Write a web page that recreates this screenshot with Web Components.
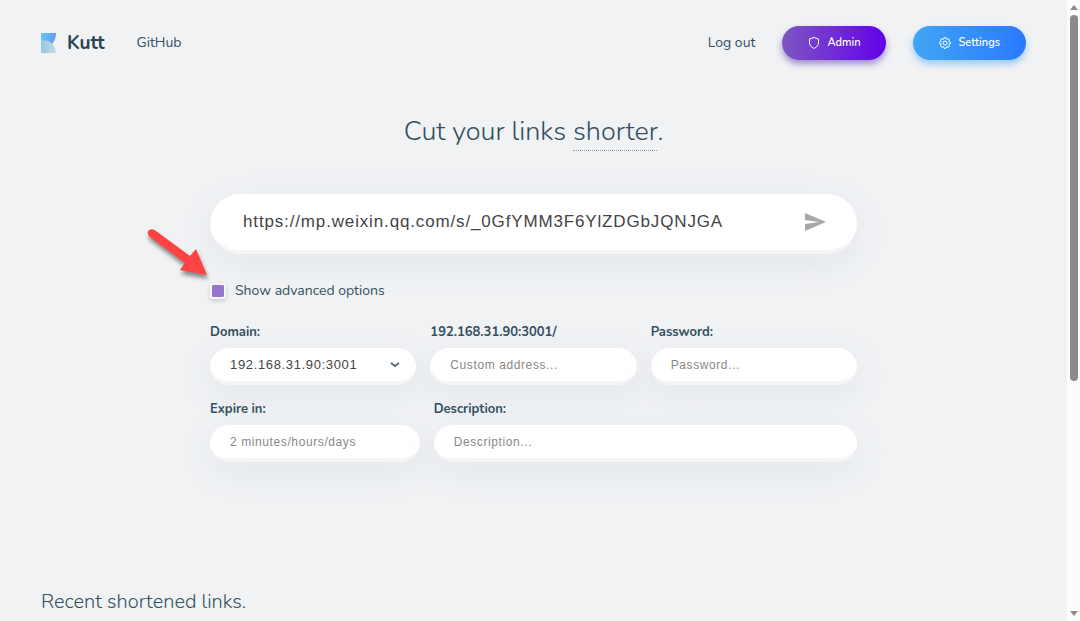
<!DOCTYPE html>
<html lang="en">
<head>
<meta charset="utf-8">
<meta name="viewport" content="width=device-width, initial-scale=1">
<title>Kutt</title>
<style>
  body {
    margin: 0;
    background: #f0f2f4;
    color: #35505f;
    font-family: Nunito, Lato, sans-serif;
    font-size: 14px;
  }
</style>
</head>
<body>
<kutt-app></kutt-app>

<template id="app">
  <style>
    :host { display: flex; min-height: 100vh; }
    .page { flex: 1; min-width: 0; display: flex; flex-direction: column; position: relative; }
    main { width: 100%; max-width: 647px; margin: 0 auto; }
    h1 {
      margin: 52px 0 42px;
      text-align: center;
      font-size: 27px;
      line-height: 40px;
      font-weight: 300;
    }
    h1 span { border-bottom: 1px dotted #909aa0; }
    form { display: flex; flex-direction: column; }
    kutt-check { margin: 28px 0 22px; }
    .row { display: grid; gap: 14px; margin-bottom: 14px; }
    .thirds { grid-template-columns: 1fr 1fr 1fr; }
    .wide { grid-template-columns: 105fr 212fr; }
    .recent { margin: 110px 41px 0; }
    h2 { margin: 0; font-size: 20px; line-height: 32px; font-weight: 300; }
    kutt-pointer { position: absolute; top: 222px; right: calc(50% + 326px); }
  </style>
  <div class="page">
    <kutt-header></kutt-header>
    <main>
      <h1>Cut your links <span>shorter</span>.</h1>
      <form>
        <kutt-url></kutt-url>
        <kutt-check>Show advanced options</kutt-check>
        <div class="row thirds">
          <kutt-select value="192.168.31.90:3001">Domain:</kutt-select>
          <kutt-field placeholder="Custom address...">192.168.31.90:3001/</kutt-field>
          <kutt-field type="password" placeholder="Password...">Password:</kutt-field>
        </div>
        <div class="row wide">
          <kutt-field placeholder="2 minutes/hours/days">Expire in:</kutt-field>
          <kutt-field placeholder="Description...">Description:</kutt-field>
        </div>
      </form>
    </main>
    <section class="recent"><h2>Recent shortened links.</h2></section>
    <kutt-pointer></kutt-pointer>
  </div>
  <kutt-scrollbar></kutt-scrollbar>
</template>

<template id="header">
  <style>
    :host { display: block; }
    header { display: flex; align-items: center; padding: 26px 41px 0; height: 34px; }
    a { color: inherit; text-decoration: none; }
    .logo { display: flex; align-items: center; gap: 10px; font-size: 19px; font-weight: 700; line-height: 24px; color: #2a4553; }
    .link { margin-left: 32px; line-height: 20px; }
    nav { display: flex; align-items: center; gap: 27px; margin-left: auto; line-height: 20px; }
    svg { display: block; }
  </style>
  <header>
    <a class="logo" href="#">
      <svg width="16" height="20" viewBox="0 0 16 20" aria-hidden="true">
        <defs>
          <linearGradient id="t" x1="0" x2="1"><stop stop-color="#5cc6fa"/><stop offset="1" stop-color="#7296f4"/></linearGradient>
          <linearGradient id="b" x1="0" x2="1"><stop stop-color="#92c9e6"/><stop offset="1" stop-color="#cbd8de"/></linearGradient>
        </defs>
        <path d="M0 0H15Q15 7 11 11L0 12Z" fill="url(#t)"/>
        <path d="M0 7Q14 7 15 20H0Z" fill="url(#b)"/>
      </svg>
      <span>Kutt</span>
    </a>
    <a class="link" href="#">GitHub</a>
    <nav>
      <a href="#">Log out</a>
      <kutt-button tone="purple">
        <svg slot="icon" width="12" height="12" viewBox="0 0 24 24" fill="none" stroke="#fff" stroke-width="2" stroke-linejoin="round" aria-hidden="true"><path d="M12 23s9-4 9-11V4l-9-3-9 3v8c0 7 9 11 9 11z"/></svg>
        Admin
      </kutt-button>
      <kutt-button tone="blue">
        <svg slot="icon" width="12" height="12" viewBox="0 0 24 24" fill="none" stroke="#fff" stroke-width="2" stroke-linejoin="round" aria-hidden="true"><circle cx="12" cy="12" r="4"/><path d="M12 1Q15 1 15 4.500Q18 3 20 4.500Q21.500 6.500 19.500 9Q23 9.500 23 12Q23 14.500 19.500 15Q21.500 17.500 20 19.500Q18 21 15 19.500Q14.500 23 12 23Q9.500 23 9 19.500Q6 21 4 19.500Q2.500 17.500 4.500 15Q1 14.500 1 12Q1 9.500 4.500 9Q2.500 6.500 4 4.500Q6 3 9 4.500Q9 1 12 1Z"/></svg>
        Settings
      </kutt-button>
    </nav>
  </header>
</template>

<template id="button">
  <style>
    :host { display: block; }
    button {
      display: flex; align-items: center; gap: 7px;
      height: 34px; padding: 0 26px; border: 0; border-radius: 17px;
      font: 600 11px/16px Nunito, Lato, sans-serif; color: #fff;
      background: linear-gradient(to right, #42a5f5, #2979ff);
      box-shadow: 0 4px 6px rgba(66, 165, 245, .5);
    }
    :host([tone="purple"]) button {
      background: linear-gradient(to right, #7e57c2, #6200ea);
      box-shadow: 0 4px 6px rgba(81, 45, 168, .5);
    }
  </style>
  <button type="button"><slot name="icon"></slot><span><slot></slot></span></button>
</template>

<template id="url">
  <style>
    :host { display: block; }
    .box {
      display: flex; align-items: center; box-sizing: border-box; height: 60px;
      padding: 0 31px 0 33px; background: #fff; border-radius: 30px;
      border-bottom: 4px solid #f5f5f5; box-shadow: 0 9px 32px rgba(160, 170, 190, .15);
    }
    input {
      flex: 1; min-width: 0; padding: 0; border: 0; outline: 0; background: none;
      font: 17px/24px "Liberation Sans", Arial, sans-serif; letter-spacing: 0.05em; color: #444;
    }
    button { padding: 0; border: 0; background: none; }
    svg { display: block; }
  </style>
  <div class="box">
    <input type="text" aria-label="Long URL" value="https://mp.weixin.qq.com/s/_0GfYMM3F6YlZDGbJQNJGA">
    <button type="button" aria-label="Shorten">
      <svg width="22" height="22" viewBox="0 0 22 22" fill="#a8a8a8"><path d="M1 2 22 11 1 20V13L15 11 1 9Z"/></svg>
    </button>
  </div>
</template>

<template id="check">
  <style>
    :host { display: block; }
    label { display: flex; align-items: center; gap: 9px; line-height: 18px; }
    input {
      appearance: none; box-sizing: border-box; width: 16px; height: 16px; margin: 0;
      border: 2px solid #f6f6fa; border-radius: 3px; background: #9575cd;
      background-clip: padding-box; box-shadow: 0 2px 4px rgba(50, 50, 50, .2);
    }
  </style>
  <label><input type="checkbox" checked><slot></slot></label>
</template>

<template id="field">
  <style>
    :host { display: block; min-width: 0; }
    label { display: block; margin-bottom: 6px; font-size: 13px; line-height: 20px; font-weight: 700; }
    .control { position: relative; }
    input, select {
      display: block; appearance: none; box-sizing: border-box; width: 100%; height: 37px;
      margin: 0; padding: 0 20px; border: 0; border-bottom: 4px solid #f5f5f5;
      border-radius: 19px; outline: 0; background: #fff;
      font: 13px/20px "Liberation Sans", Arial, sans-serif; letter-spacing: 0.05em; color: #444;
      box-shadow: 0 9px 32px rgba(160, 170, 190, .15);
    }
    input { font-size: 12px; }
    input::placeholder { color: #888; opacity: 1; }
    svg { position: absolute; right: 16px; top: 12px; }
  </style>
  <label for="control"><slot></slot></label>
  <div class="control"></div>
</template>

<template id="pointer">
  <style>
    :host { display: block; pointer-events: none; }
    svg { display: block; overflow: visible; filter: drop-shadow(1px 4px 2px rgba(0, 0, 0, .45)); }
  </style>
  <svg width="66" height="62" viewBox="0 0 66 62" fill="#ff4342" aria-hidden="true"><path d="M7 8Q11 6 14 9L48 34 54 27 65 53 38 48 43 41 8 15Q4 11 7 8Z"/></svg>
</template>

<template id="scrollbar">
  <style>
    :host {
      display: flex; flex-direction: column; align-items: center; justify-content: space-between;
      box-sizing: border-box; width: 13px; padding: 5px 0; background: #fcfcfc;
    }
    .track { flex: 1; width: 8px; padding: 5px 0; }
    .thumb { width: 8px; height: 62%; border-radius: 4px; background: #8b8b8b; }
    svg { display: block; }
  </style>
  <svg width="8" height="5" viewBox="0 0 8 5" fill="#8b8b8b" aria-hidden="true"><path d="M4 0 8 5H0Z"/></svg>
  <div class="track"><div class="thumb"></div></div>
  <svg width="8" height="5" viewBox="0 0 8 5" fill="#8b8b8b" aria-hidden="true"><path d="M0 0H8L4 5Z"/></svg>
</template>

<script>
  class KuttElement extends HTMLElement {
    constructor() {
      super();
      const root = this.attachShadow({ mode: "open" });
      root.append(document.getElementById(this.constructor.template).content.cloneNode(true));
    }
  }
  const define = (name, template) =>
    customElements.define(name, class extends KuttElement { static template = template; });

  class KuttField extends KuttElement {
    static template = "field";
    connectedCallback() {
      const input = document.createElement("input");
      input.id = "control";
      input.type = this.getAttribute("type") || "text";
      input.placeholder = this.getAttribute("placeholder") || "";
      this.shadowRoot.querySelector(".control").replaceChildren(input);
    }
  }

  class KuttSelect extends KuttElement {
    static template = "field";
    connectedCallback() {
      const box = this.shadowRoot.querySelector(".control");
      box.innerHTML = `<select id="control"></select>
        <svg width="10" height="10" viewBox="0 0 10 10" fill="none" stroke="#5b6a74" stroke-width="2" aria-hidden="true"><path d="M1 3 5 6 9 3"/></svg>`;
      box.querySelector("select").add(new Option(this.getAttribute("value")));
    }
  }

  define("kutt-button", "button");
  define("kutt-header", "header");
  define("kutt-url", "url");
  define("kutt-check", "check");
  define("kutt-pointer", "pointer");
  define("kutt-scrollbar", "scrollbar");
  customElements.define("kutt-field", KuttField);
  customElements.define("kutt-select", KuttSelect);
  define("kutt-app", "app");
</script>
</body>
</html>
